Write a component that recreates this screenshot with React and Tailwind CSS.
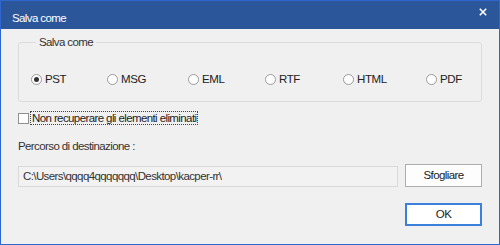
import React from "react";

const font = { fontFamily: '"Liberation Sans", Arial, sans-serif' };

const formats = [
  { label: "PST", w: "w-[76px]", checked: true },
  { label: "MSG", w: "w-[81px]" },
  { label: "EML", w: "w-[77px]" },
  { label: "RTF", w: "w-[78px]" },
  { label: "HTML", w: "w-[83px]" },
  { label: "PDF", w: "w-auto" },
];

function Radio({ label, w, checked }) {
  return (
    <label className={`flex items-center ${w} h-[14px]`}>
      <span className="w-[11px] h-[11px] rounded-full border border-[#9a9a9a] bg-white flex items-center justify-center shrink-0">
        {checked && <span className="w-[5px] h-[5px] rounded-full bg-[#333]" />}
      </span>
      <span className="ml-[3px] text-[11.5px] tracking-[-0.4px] leading-[14px] text-[#222]">{label}</span>
    </label>
  );
}

export default function App() {
  return (
    <div
      className="w-[500px] h-[245px] border border-[#2f67cc] bg-[#f0f0f0] flex flex-col text-[11.5px] tracking-[-0.6px]"
      style={font}
    >
      {/* title bar */}
      <div className="h-[28px] bg-[#2b579a] flex items-start justify-between shrink-0">
        <span className="ml-[11px] mt-[10px] text-white leading-[14px]">Salva come</span>
        <svg className="mt-[7px] mr-[12px]" width="8" height="8" viewBox="0 0 8 8">
          <path d="M0.8 0.8 L7.2 7.2 M7.2 0.8 L0.8 7.2" stroke="white" strokeWidth="1.6" />
        </svg>
      </div>

      <div className="flex-1 flex flex-col pl-[17px] pr-[17px]">
        <fieldset className="mt-[6px] h-[67px] border border-[#dcdcdc] rounded-[3px] pl-[12px]">
          <legend className="ml-[5px] px-[3px] leading-[14px] text-[#333]">Salva come</legend>
          <div className="flex items-center mt-[23px]">
            {formats.map((f) => (
              <Radio key={f.label} {...f} />
            ))}
          </div>
        </fieldset>

        <label className="flex items-center mt-[9px] h-[14px]">
          <span className="w-[11px] h-[11px] border border-[#8f8f8f] bg-white shrink-0" />
          <span className="ml-[1px] px-[1px] border border-dotted border-[#444] leading-[12px] text-[#222]">
            Non recuperare gli elementi eliminati
          </span>
        </label>

        <div className="mt-[14px] leading-[14px] text-[#333]">Percorso di destinazione :</div>

        <div className="mt-[11px] flex items-end gap-[7px]">
          <div className="flex-1 h-[21px] border border-[#d9d9d9] bg-[#f2f2f2] flex items-center pl-[4px] text-[#333]">
            C:\Users\qqqq4qqqqqqq\Desktop\kacper-rr\
          </div>
          <button className="w-[77px] h-[23px] border border-[#adadad] bg-[#fdfdfd] text-[#222]">
            Sfogliare
          </button>
        </div>

        <div className="mt-[16px] flex justify-end">
          <button className="w-[77px] h-[23px] border-2 border-[#3b80da] bg-white text-[#222]">
            OK
          </button>
        </div>
      </div>
    </div>
  );
}
